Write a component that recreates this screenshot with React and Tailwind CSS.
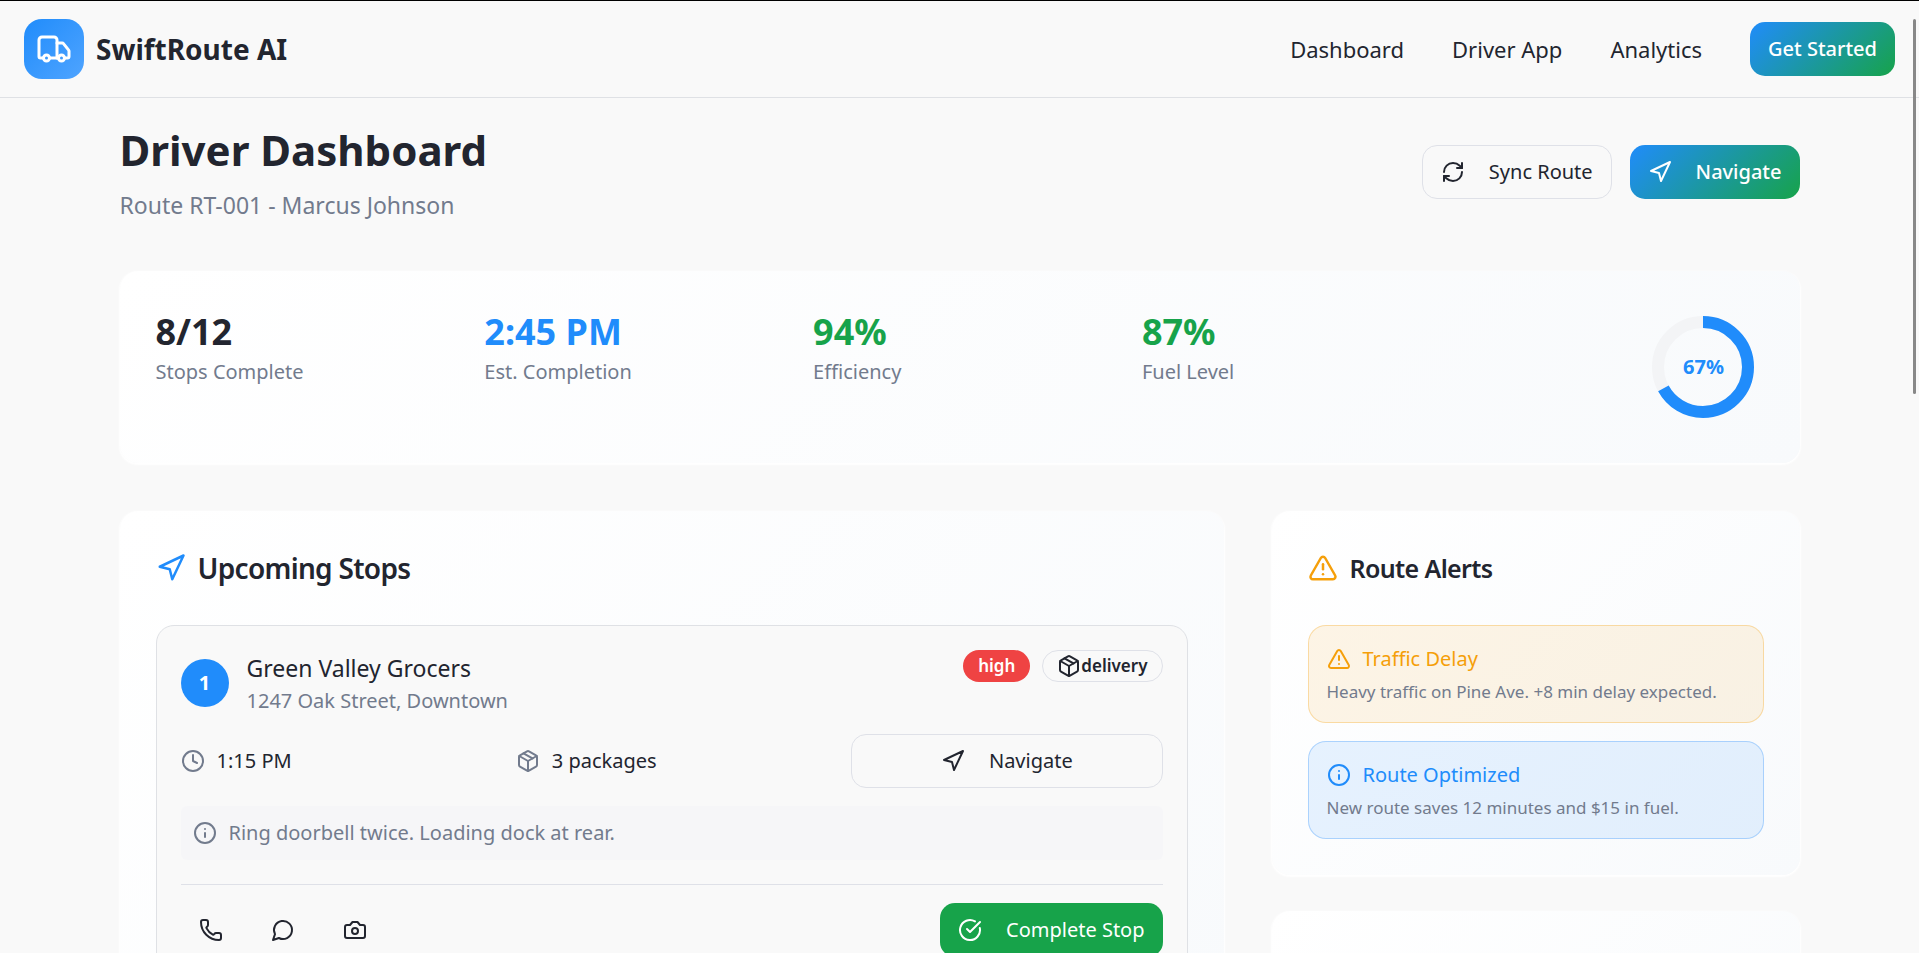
import {
  Clock,
  Info,
  Navigation,
  Package,
  Phone,
  RefreshCw,
  TriangleAlert,
  Truck,
} from "lucide-react";

const stats = [
  { value: "8/12", label: "Stops Complete", color: "text-[#22252f]" },
  { value: "2:45 PM", label: "Est. Completion", color: "text-[#208cfb]" },
  { value: "94%", label: "Efficiency", color: "text-[#17a34a]" },
  { value: "87%", label: "Fuel Level", color: "text-[#17a34a]" },
];

const card =
  "rounded-[18px] bg-[linear-gradient(135deg,#ffffff,#f8fafc)] shadow-[0_1px_2px_1px_#ffffff]";
const button =
  "flex h-[54px] items-center justify-center gap-6 rounded-[15px] px-[18px] text-[20px] leading-[30px]";
const outline = "border border-[#dfe1e8] bg-[#f9f9f9]";
const gradient =
  "bg-[linear-gradient(135deg,#208cfb,#17a34a)] font-medium text-white";

const Icon = ({ children }) => (
  <svg
    viewBox="0 0 24 24"
    fill="none"
    stroke="currentColor"
    strokeWidth="2"
    strokeLinecap="round"
    strokeLinejoin="round"
    className="size-6"
    aria-hidden="true"
  >
    {children}
  </svg>
);

const Header = () => {
  return (
    <header className="flex items-center justify-between border-t border-b border-t-black border-b-[#dfe1e5] px-6 py-[18px]">
      <div className="flex items-center gap-3">
        <div className="flex size-[60px] items-center justify-center rounded-[18px] bg-[linear-gradient(135deg,#208cfb,#4fa4ff)] text-white">
          <Truck className="size-9" />
        </div>
        <span className="text-[28px] leading-[42px] font-bold">
          SwiftRoute AI
        </span>
      </div>
      <nav className="flex items-center gap-12 text-[22px] leading-9">
        <a href="#">Dashboard</a>
        <a href="#">Driver App</a>
        <a href="#">Analytics</a>
        <button className={`${button} ${gradient}`}>Get Started</button>
      </nav>
    </header>
  );
};

const ProgressRing = ({ percent }) => {
  const length = 2 * Math.PI * 45;
  return (
    <div className="relative size-[120px]">
      <svg viewBox="0 0 120 120" className="size-full -rotate-90" fill="none">
        <circle cx="60" cy="60" r="45" stroke="#f3f4f6" strokeWidth="12" />
        <circle
          cx="60"
          cy="60"
          r="45"
          stroke="#208cfb"
          strokeWidth="12"
          strokeDasharray={`${(length * percent) / 100} ${length}`}
        />
      </svg>
      <span className="absolute inset-0 flex items-center justify-center text-[20px] font-bold text-[#208cfb]">
        {percent}%
      </span>
    </div>
  );
};

const Stats = () => {
  return (
    <section className={`${card} grid grid-cols-5 gap-9 p-9`}>
      {stats.map((stat) => (
        <div key={stat.label}>
          <div className={`text-[36px] leading-[50px] font-bold ${stat.color}`}>
            {stat.value}
          </div>
          <div className="text-[20px] leading-[30px] text-[#727b8d]">
            {stat.label}
          </div>
        </div>
      ))}
      <div className="flex justify-end">
        <ProgressRing percent={67} />
      </div>
    </section>
  );
};

const Stop = () => {
  return (
    <article className="rounded-[18px] border border-[#dfe1e5] bg-[#f9f9f9] p-6 text-[20px] leading-[30px]">
      <div className="flex items-start justify-between">
        <div className="flex items-center gap-[18px]">
          <div className="flex size-12 items-center justify-center rounded-full bg-[#208cfb] font-bold text-white">
            1
          </div>
          <div>
            <h3 className="text-[23px] leading-9">Green Valley Grocers</h3>
            <p className="text-[#727b8d]">1247 Oak Street, Downtown</p>
          </div>
        </div>
        <div className="flex gap-3 text-[17px] leading-6 font-semibold">
          <span className="flex h-8 items-center rounded-full bg-[#ef4343] px-[15px] text-white">
            high
          </span>
          <span className="flex h-8 items-center rounded-full border border-[#dfe1e8] px-3.5">
            <Package className="size-6" />
            delivery
          </span>
        </div>
      </div>
      <div className="mt-[18px] grid grid-cols-3 items-center gap-6">
        <div className="flex items-center gap-3">
          <Clock className="size-6 text-[#727b8d]" />
          1:15 PM
        </div>
        <div className="flex items-center gap-3">
          <Package className="size-6 text-[#727b8d]" />3 packages
        </div>
        <button className={`${button} ${outline}`}>
          <Navigation className="size-6" />
          Navigate
        </button>
      </div>
      <div className="mt-[18px] flex items-center gap-3 rounded-md bg-[#f6f6f8] p-3 text-[#727b8d]">
        <Info className="size-6" />
        Ring doorbell twice. Loading dock at rear.
      </div>
      <div className="mt-6 flex items-center justify-between border-t border-[#dfe1e8] pt-[18px]">
        <div className="flex gap-3">
          <button className={button} aria-label="Call">
            <Phone className="size-6" />
          </button>
          <button className={button} aria-label="Message">
            <Icon>
              <path d="M7.9 20A9 9 0 1 0 4 16.1L2 22Z" />
            </Icon>
          </button>
          <button className={button} aria-label="Take photo">
            <Icon>
              <path d="M14.5 4h-5L7 7H4a2 2 0 0 0-2 2v9a2 2 0 0 0 2 2h16a2 2 0 0 0 2-2V9a2 2 0 0 0-2-2h-3l-2.5-3z" />
              <circle cx="12" cy="13" r="3" />
            </Icon>
          </button>
        </div>
        <button className={`${button} bg-[#17a34a] text-white`}>
          <Icon>
            <path d="M21.801 10A10 10 0 1 1 17 3.335" />
            <path d="m9 11 3 3L22 4" />
          </Icon>
          Complete Stop
        </button>
      </div>
    </article>
  );
};

const Alert = ({ icon: AlertIcon, title, text, box, color }) => {
  return (
    <div className={`rounded-[18px] border p-[18px] ${box}`}>
      <div
        className={`flex items-center gap-3 text-[20px] leading-[30px] ${color}`}
      >
        <AlertIcon className="size-6" />
        {title}
      </div>
      <p className="mt-1.5 text-[17px] leading-6 text-[#727b8d]">{text}</p>
    </div>
  );
};

export default function App() {
  return (
    <div className="h-screen overflow-y-auto bg-[#f9f9f9] font-['Noto_Sans',sans-serif] text-[#22252f] [scrollbar-width:none]">
      <Header />
      <main className="mx-auto max-w-[1680px] pt-[23px] pb-12">
        <div className="mb-12 flex items-center justify-between">
          <div>
            <h1 className="text-[42px] leading-[58px] font-bold">
              Driver Dashboard
            </h1>
            <p className="mt-2 text-[23px] leading-9 text-[#727b8d]">
              Route RT-001 - Marcus Johnson
            </p>
          </div>
          <div className="flex gap-[18px]">
            <button className={`${button} ${outline}`}>
              <RefreshCw className="size-6" />
              Sync Route
            </button>
            <button className={`${button} ${gradient}`}>
              <Navigation className="size-6" />
              Navigate
            </button>
          </div>
        </div>
        <Stats />
        <div className="mt-12 grid grid-cols-3 items-start gap-12">
          <section className={`${card} col-span-2 p-9`}>
            <h2 className="mb-9 flex items-center gap-3 text-[28px] leading-[42px] font-semibold tracking-tight">
              <Navigation className="size-[30px] text-[#208cfb]" />
              Upcoming Stops
            </h2>
            <Stop />
          </section>
          <aside className="flex flex-col gap-9">
            <section className={`${card} p-9`}>
              <h2 className="mb-9 flex items-center gap-3 text-[25px] leading-[42px] font-semibold tracking-tight">
                <TriangleAlert className="size-[30px] text-[#f59f0a]" />
                Route Alerts
              </h2>
              <div className="flex flex-col gap-[18px]">
                <Alert
                  icon={TriangleAlert}
                  title="Traffic Delay"
                  text="Heavy traffic on Pine Ave. +8 min delay expected."
                  box="border-[#f59f0a]/30 bg-[#f59f0a]/10"
                  color="text-[#f59f0a]"
                />
                <Alert
                  icon={Info}
                  title="Route Optimized"
                  text="New route saves 12 minutes and $15 in fuel."
                  box="border-[#208cfb]/30 bg-[#208cfb]/10"
                  color="text-[#208cfb]"
                />
              </div>
            </section>
            <section className={`${card} h-72`}></section>
          </aside>
        </div>
      </main>
      {/* scroll thumb */}
      <div className="fixed top-[19px] right-[3px] h-[375px] w-[3px] rounded-full bg-[#888888]"></div>
    </div>
  );
}
